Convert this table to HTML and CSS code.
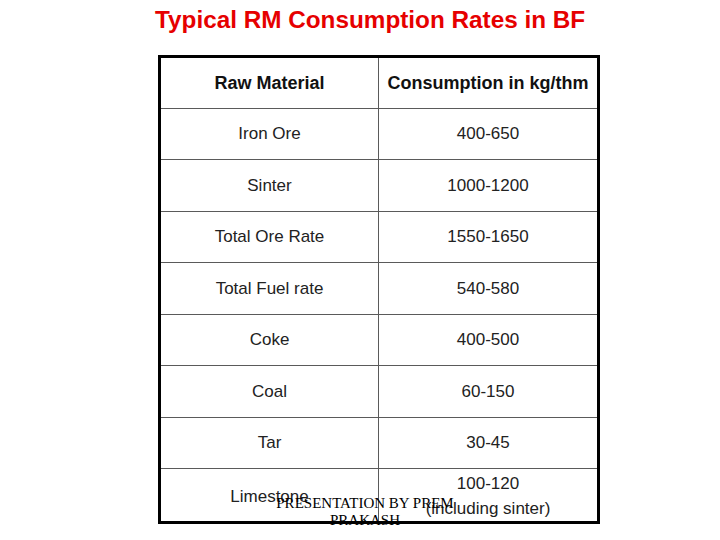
FILE: index.html
```html
<!DOCTYPE html>
<html>
<head>
<meta charset="utf-8">
<link rel="stylesheet" href="styles.css">
</head>
<body>
<div class="slide">
  <h1 class="title">Typical RM Consumption Rates in BF</h1>
  <div class="table">
    <div class="cell head">Raw Material</div>
    <div class="cell head">Consumption in kg/thm</div>
    <div class="cell">Iron Ore</div>
    <div class="cell">400-650</div>
    <div class="cell">Sinter</div>
    <div class="cell">1000-1200</div>
    <div class="cell">Total Ore Rate</div>
    <div class="cell">1550-1650</div>
    <div class="cell">Total Fuel rate</div>
    <div class="cell">540-580</div>
    <div class="cell">Coke</div>
    <div class="cell">400-500</div>
    <div class="cell">Coal</div>
    <div class="cell">60-150</div>
    <div class="cell">Tar</div>
    <div class="cell">30-45</div>
    <div class="cell low">Limestone</div>
    <div class="cell two">100-120<br>(including sinter)</div>
  </div>
  <div class="footer">PRESENTATION BY PREM PRAKASH</div>
</div>
</body>
</html>
```
FILE: styles.css
```css
html, body {
  margin: 0;
  padding: 0;
  background: #fff;
}
.slide {
  position: relative;
  width: 720px;
  height: 540px;
  overflow: hidden;
  font-family: "Liberation Sans", Arial, sans-serif;
}
.title {
  margin: 0;
  padding: 6px 0 0 155px;
  font-size: 24.3px;
  line-height: 28px;
  font-weight: bold;
  color: #e60000;
  white-space: nowrap;
}
.table {
  margin: 21px 0 0 158px;
  width: 436px;
  border: 3px solid #000;
  background: #5a5a5a;
  display: grid;
  grid-template-columns: 217px 218px;
  grid-template-rows: 50px 50px 51px 50px 51px 50px 51px 50px 52px;
  gap: 1px;
}
.cell {
  background: #fff;
  display: flex;
  align-items: center;
  justify-content: center;
  text-align: center;
  font-size: 17px;
  color: #222;
}
.cell.head {
  font-size: 18px;
  font-weight: bold;
  color: #111;
}
.cell.low {
  padding-top: 4px;
}
.cell.two {
  line-height: 25px;
  padding-top: 2px;
}
.footer {
  position: absolute;
  left: 265px;
  top: 495px;
  width: 200px;
  text-align: center;
  font-family: "Liberation Serif", "Times New Roman", serif;
  font-size: 15px;
  line-height: 17px;
  color: #000;
}
```
